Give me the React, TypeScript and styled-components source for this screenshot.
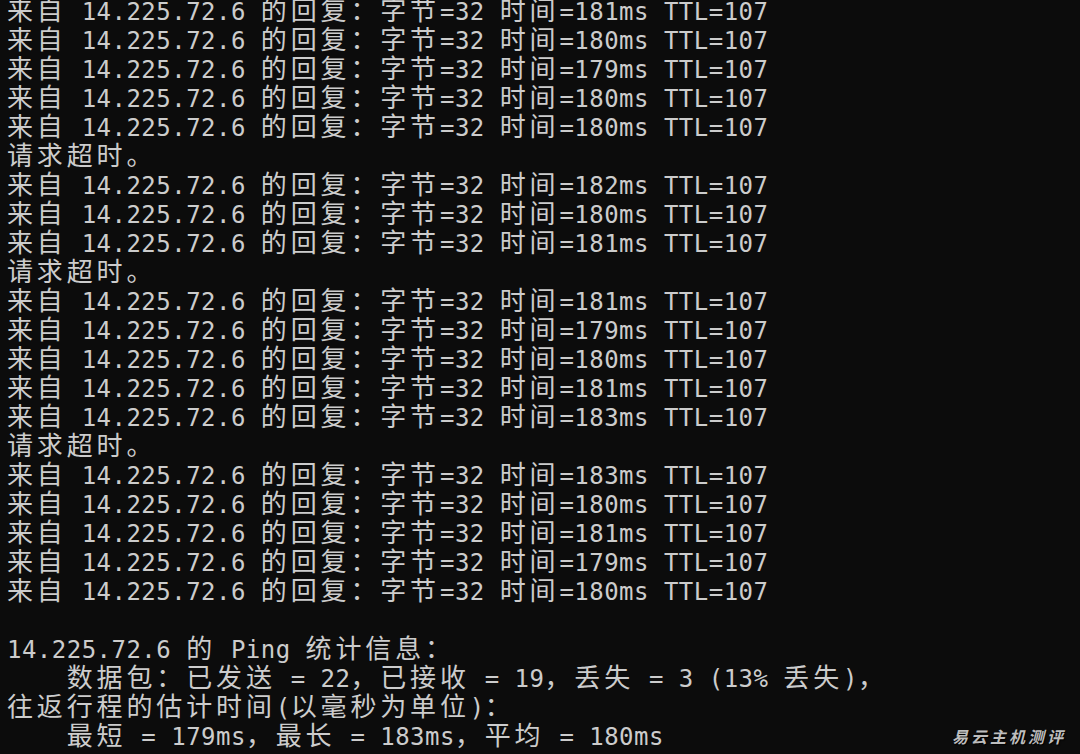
import React from "react";
import styled, { createGlobalStyle } from "styled-components";

const Global = createGlobalStyle`
  html, body {
    margin: 0;
    padding: 0;
    background: #0c0c0c;
    overflow: hidden;
  }
`;

const Screen = styled.div`
  position: relative;
  width: 1080px;
  height: 754px;
  overflow: hidden;
  background: #0c0c0c;
  color: #cccccc;
`;

const Output = styled.div`
  display: flex;
  flex-direction: column;
  margin-top: -6px;
  padding-left: 7px;
`;

const Line = styled.div`
  height: 29px;
  line-height: 29px;
  white-space: pre;
  font-family: "DejaVu Sans Mono", monospace;
  font-size: 24px;
`;

const Narrow = styled.span`
  font-family: "DejaVu Sans Mono", monospace;
  font-size: 24px;
  letter-spacing: 0.48px;
`;

const Wide = styled.span`
  display: inline-block;
  width: 29.86px;
  font-family: "Noto Sans CJK SC", sans-serif;
  font-size: 26px;
  line-height: 29px;
`;

const Watermark = styled.div`
  position: absolute;
  right: 14px;
  bottom: 6px;
  font-family: "Noto Sans CJK SC", sans-serif;
  font-size: 16px;
  font-weight: 700;
  font-style: italic;
  letter-spacing: 3px;
  color: #bdbdbd;
  text-shadow: 1px 1px 1px #000;
`;

const isWide = (ch: string) => {
  const c = ch.codePointAt(0) || 0;
  return c >= 0x2e80;
};

function TermLine({ text }: { text: string }) {
  const parts: React.ReactNode[] = [];
  let buf = "";
  let k = 0;
  for (const ch of Array.from(text)) {
    if (isWide(ch)) {
      if (buf) {
        parts.push(<Narrow key={k++}>{buf}</Narrow>);
        buf = "";
      }
      parts.push(<Wide key={k++}>{ch}</Wide>);
    } else {
      buf += ch;
    }
  }
  if (buf) parts.push(<Narrow key={k++}>{buf}</Narrow>);
  return <Line>{parts}</Line>;
}

const times: (number | null)[] = [
  181, 180, 179, 180, 180, null, 182, 180, 181, null, 181, 179, 180, 181, 183,
  null, 183, 180, 181, 179, 180,
];

const lines: string[] = [
  ...times.map((t) =>
    t === null ? "请求超时。" : `来自 14.225.72.6 的回复：字节=32 时间=${t}ms TTL=107`
  ),
  "",
  "14.225.72.6 的 Ping 统计信息：",
  "    数据包：已发送 = 22，已接收 = 19，丢失 = 3 (13% 丢失)，",
  "往返行程的估计时间(以毫秒为单位)：",
  "    最短 = 179ms，最长 = 183ms，平均 = 180ms",
];

export default function App() {
  return (
    <Screen>
      <Global />
      <Output>
        {lines.map((l, i) => (
          <TermLine key={i} text={l} />
        ))}
      </Output>
      <Watermark>易云主机测评</Watermark>
    </Screen>
  );
}
